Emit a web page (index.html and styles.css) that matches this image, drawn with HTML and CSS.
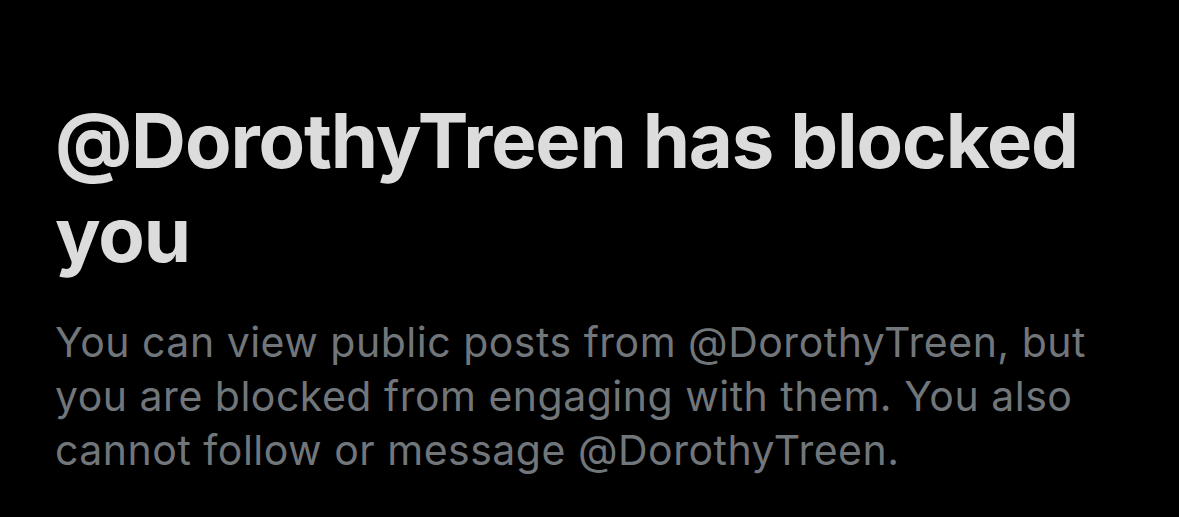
FILE: index.html
```html
<!DOCTYPE html>
<html>
<head>
<meta charset="utf-8">
<link rel="stylesheet" href="styles.css">
</head>
<body>
<main class="page">
  <h1 class="title">@DorothyTreen has blocked you</h1>
  <p class="desc">You can view public posts from @DorothyTreen, but you are blocked from engaging with them. You also cannot follow or message @DorothyTreen.</p>
</main>
</body>
</html>
```
FILE: styles.css
```css
html, body {
  margin: 0;
  padding: 0;
  background: #000;
  height: 100%;
}
.page {
  padding: 93px 60px 0 55px;
  font-family: Inter, "Noto Sans", sans-serif;
}
.title {
  margin: 0;
  color: #dcdcdc;
  font-size: 76px;
  font-weight: 700;
  line-height: 94px;
  letter-spacing: -1.1px;
  max-width: 1064px;
}
.desc {
  margin: 34px 0 0;
  color: #71767b;
  font-size: 41px;
  font-weight: 400;
  line-height: 54px;
  letter-spacing: 0.5px;
  max-width: 1064px;
}
```
